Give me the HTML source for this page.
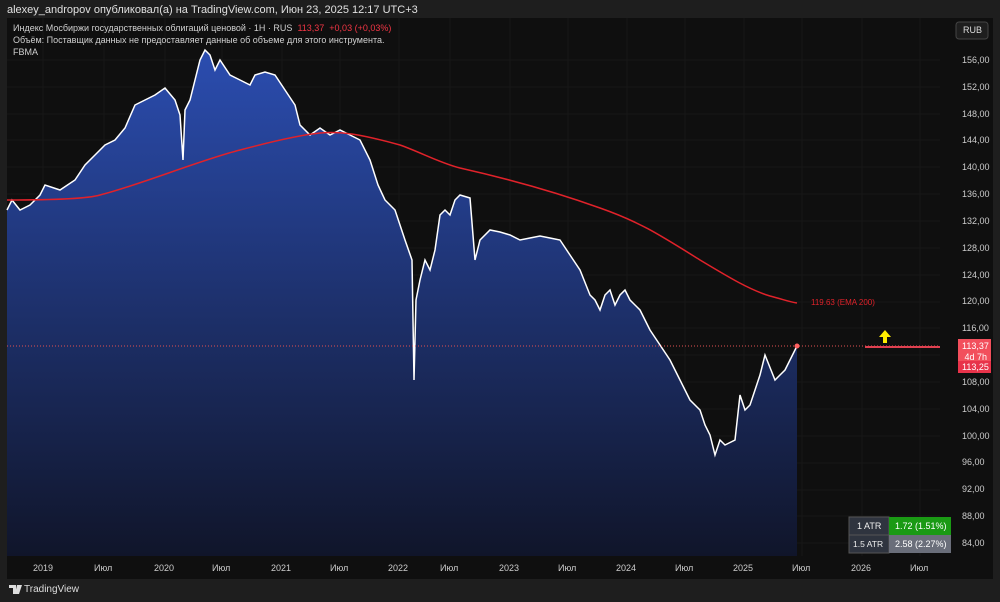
<!DOCTYPE html>
<html><head><meta charset="utf-8"><style>
body{margin:0;width:1000px;height:602px;background:#1e1e1e;font-family:"Liberation Sans",sans-serif;overflow:hidden;position:relative}
.t{position:absolute;white-space:nowrap}
</style></head><body>
<div class="t" style="left:7px;top:4px;font-size:11px;color:#e0e0e0">alexey_andropov опубликовал(а) на TradingView.com, Июн 23, 2025 12:17 UTC+3</div>
<svg style="position:absolute;left:0;top:0" width="1000" height="602">
<defs><linearGradient id="g" x1="0" y1="0" x2="0" y2="1"><stop offset="0" stop-color="#2b4db0"/><stop offset="1" stop-color="#10152a"/></linearGradient></defs>
<rect x="7" y="18" width="986" height="561" fill="#0f0f0f"/>
<g stroke="#171717" stroke-width="1">
<path d="M7 60H940M7 87H940M7 114H940M7 140H940M7 167H940M7 194H940M7 221H940M7 248H940M7 275H940M7 302H940M7 328H940M7 355H940M7 382H940M7 409H940M7 436H940M7 463H940M7 490H940M7 516H940M7 543H940"/>
<path d="M43 18V556M104 18V556M165 18V556M222 18V556M282 18V556M340 18V556M399 18V556M450 18V556M510 18V556M568 18V556M627 18V556M685 18V556M744 18V556M802 18V556M862 18V556M920 18V556"/>
</g>
<path fill="url(#g)" d="M7 210L12 200L20 210L30 205L40 195L45 185L60 190L75 180L85 165L95 155L105 145L115 140L125 128L135 105L145 100L155 95L165 88L175 100L180 115L183 160L185 110L190 100L195 80L200 60L205 50L210 55L215 70L220 60L230 75L240 80L250 85L255 75L265 72L275 75L285 90L295 105L300 125L310 135L320 128L330 135L340 130L350 135L360 140L370 160L378 185L385 200L395 210L405 240L412 260L414 380L416 300L420 280L425 260L430 270L435 250L440 215L445 210L450 215L455 200L460 195L470 198L475 260L480 240L490 230L500 232L510 235L520 240L530 238L540 236L550 238L560 240L570 255L580 270L590 295L595 300L600 310L605 295L610 290L615 305L620 295L625 290L630 300L640 310L650 330L660 345L670 360L680 380L690 400L700 410L705 425L710 435L715 455L720 440L725 445L735 440L740 395L745 410L750 405L755 390L760 375L765 355L775 380L780 375L785 370L790 360L797 346L797 556L7 556Z"/>
<path fill="none" stroke="#fff" stroke-width="1.5" d="M7 210L12 200L20 210L30 205L40 195L45 185L60 190L75 180L85 165L95 155L105 145L115 140L125 128L135 105L145 100L155 95L165 88L175 100L180 115L183 160L185 110L190 100L195 80L200 60L205 50L210 55L215 70L220 60L230 75L240 80L250 85L255 75L265 72L275 75L285 90L295 105L300 125L310 135L320 128L330 135L340 130L350 135L360 140L370 160L378 185L385 200L395 210L405 240L412 260L414 380L416 300L420 280L425 260L430 270L435 250L440 215L445 210L450 215L455 200L460 195L470 198L475 260L480 240L490 230L500 232L510 235L520 240L530 238L540 236L550 238L560 240L570 255L580 270L590 295L595 300L600 310L605 295L610 290L615 305L620 295L625 290L630 300L640 310L650 330L660 345L670 360L680 380L690 400L700 410L705 425L710 435L715 455L720 440L725 445L735 440L740 395L745 410L750 405L755 390L760 375L765 355L775 380L780 375L785 370L790 360L797 346"/>
<path fill="none" stroke="#e0222a" stroke-width="1.5" d="M7 200C60 200 90 198 100 195C140 185 200 160 240 150C270 142 300 135 320 133C340 131 360 134 400 145C420 152 440 163 460 168C500 177 550 190 600 208C640 222 660 235 700 260C730 278 750 290 770 296C785 300 790 302 797 303"/>
<path d="M7 346H940" stroke="#e05050" stroke-width="1" stroke-dasharray="1,2"/>
<path d="M865 347H940" stroke="#e04050" stroke-width="2"/>
<circle cx="797" cy="346" r="2.5" fill="#ff6060"/>
<path d="M885 330L879 337H883V343H887V337H891Z" fill="#ffee00"/>
<rect x="956" y="22" width="32" height="17" rx="3" fill="#1e1e1e" stroke="#444"/>
<rect x="958" y="339" width="33" height="33" fill="#f24f5c"/>
<rect x="958" y="361" width="33" height="12" fill="#e8334a"/>
<rect x="849" y="517" width="40" height="18" fill="#2f343f" stroke="#555"/>
<rect x="889" y="517" width="62" height="18" fill="#1a9a14"/>
<rect x="849" y="535" width="40" height="18" fill="#2f343f" stroke="#555"/>
<rect x="889" y="535" width="62" height="18" fill="#6a6e7a"/>
<path d="M9 585H16V594H13V588H9ZM17 585H22L19 594H15Z" fill="#ddd"/>
</svg>
<div class="t" style="left:13px;top:23px;font-size:9px;color:#d0d0d0">Индекс Мосбиржи государственных облигаций ценовой · 1H · RUS <span style="color:#f23645">&nbsp;113,37 &nbsp;+0,03 (+0,03%)</span></div>
<div class="t" style="left:13px;top:35px;font-size:9px;color:#d0d0d0">Объём: Поставщик данных не предоставляет данные об объеме для этого инструмента.</div>
<div class="t" style="left:13px;top:47px;font-size:9px;color:#d0d0d0">FBMA</div>
<div class="t" style="left:963px;top:25px;font-size:9px;color:#ddd">RUB</div>
<div class="t" style="left:811px;top:298px;font-size:8px;color:#e0222a">119.63 (EMA 200)</div>
<div class="t" style="left:962px;top:341px;font-size:9px;color:#fff;line-height:10.5px">113,37<br>&nbsp;4d 7h<br>113,25</div>
<div class="t" style="left:857px;top:521px;font-size:9px;color:#eee">1 ATR</div>
<div class="t" style="left:895px;top:521px;font-size:9px;color:#fff">1.72 (1.51%)</div>
<div class="t" style="left:853px;top:539px;font-size:8.5px;color:#eee">1.5 ATR</div>
<div class="t" style="left:895px;top:539px;font-size:9px;color:#fff">2.58 (2.27%)</div>
<div style="position:absolute;left:962px;top:47px;font-size:9px;color:#ccc;line-height:26.83px">156,00<br>152,00<br>148,00<br>144,00<br>140,00<br>136,00<br>132,00<br>128,00<br>124,00<br>120,00<br>116,00<br><br>108,00<br>104,00<br>100,00<br>96,00<br>92,00<br>88,00<br>84,00</div>
<div style="position:absolute;top:563px;font-size:9px;color:#ccc;width:1000px">
<span class="t" style="left:33px">2019</span><span class="t" style="left:94px">Июл</span><span class="t" style="left:154px">2020</span><span class="t" style="left:212px">Июл</span><span class="t" style="left:271px">2021</span><span class="t" style="left:330px">Июл</span><span class="t" style="left:388px">2022</span><span class="t" style="left:440px">Июл</span><span class="t" style="left:499px">2023</span><span class="t" style="left:558px">Июл</span><span class="t" style="left:616px">2024</span><span class="t" style="left:675px">Июл</span><span class="t" style="left:733px">2025</span><span class="t" style="left:792px">Июл</span><span class="t" style="left:851px">2026</span><span class="t" style="left:910px">Июл</span></div>
<div class="t" style="left:24px;top:584px;font-size:10px;color:#ddd">TradingView</div>
</body></html>
